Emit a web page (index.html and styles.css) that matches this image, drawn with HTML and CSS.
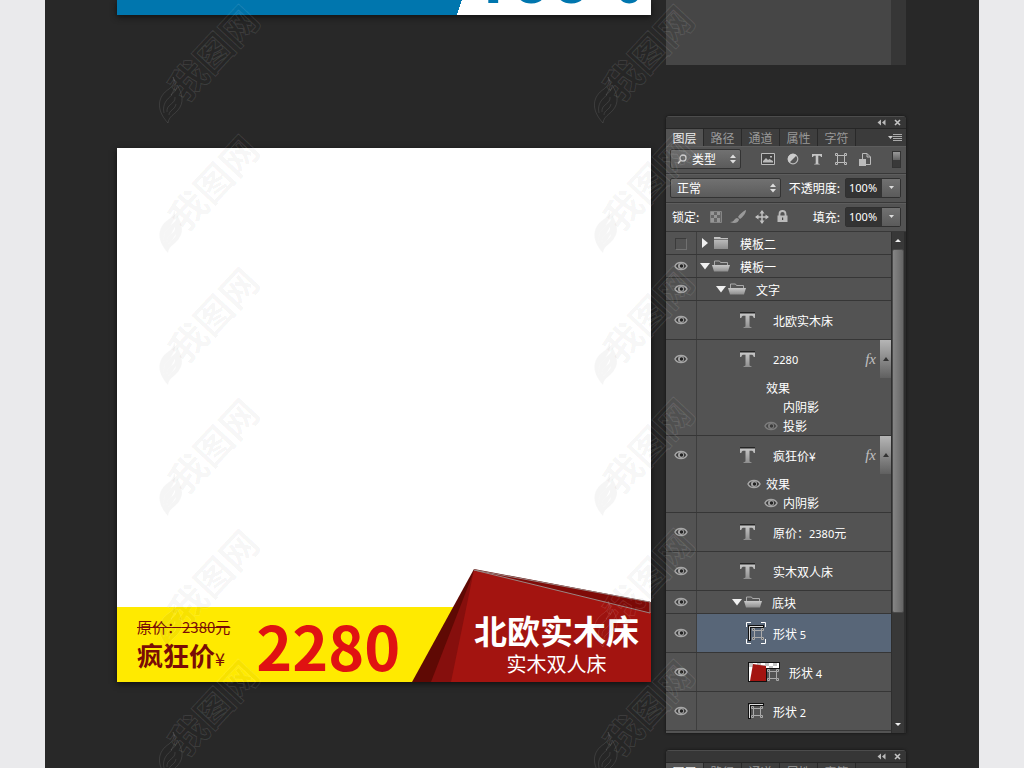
FILE: index.html
```html
<!DOCTYPE html>
<html lang="zh-CN">
<head>
<meta charset="utf-8">
<title>北欧实木床</title>
<link rel="stylesheet" href="styles.css">
</head>
<body>
<svg class="sprite" aria-hidden="true">
  <defs>
    <linearGradient id="metal" x1="0" y1="0" x2="0" y2="1"><stop offset="0" stop-color="#c8c8c8"/><stop offset="1" stop-color="#8e8e8e"/></linearGradient>
  </defs>
  <symbol id="eye" viewBox="0 0 14 10"><path d="M1 5C3 .3 11 .3 13 5 11 9.700 3 9.700 1 5Z" fill="#3a3a3a" stroke="#a6a6a6" stroke-width="1.500"/><circle cx="7" cy="5" r="3" fill="#a6a6a6"/><circle cx="7.500" cy="5" r="1.700" fill="#222"/></symbol>
  <symbol id="type" viewBox="0 0 17 17"><path d="M1 0h15v2H1z" fill="#252525"/><path d="M1 1.500h15v4.500h-1.300c-.3-1.700-1-2.200-2.700-2.200h-1.500v10c0 1 .5 1.300 2 1.400V16H4.500v-.8c1.500-.1 2-.4 2-1.400v-10H5C3.300 3.800 2.600 4.300 2.300 6H1z" fill="url(#metal)"/></symbol>
  <symbol id="type-small" viewBox="0 0 12 12"><path d="M1 1h10v3h-1c-.3-1-.7-1.300-2-1.300h-.7V10c0 .6.300.8 1.500.9v.6H3.200v-.6c1.200-.1 1.500-.3 1.500-.9V2.700H4C2.700 2.700 2.300 3 2 4H1z" fill="#c4c4c4"/></symbol>
  <symbol id="folder" viewBox="0 0 18 14"><path d="M2 1h6l1 1h7v11H2z" fill="url(#metal)"/><path d="M2 3.500h14" stroke="#777"/></symbol>
  <symbol id="folder-open" viewBox="0 0 18 14"><path d="M2.500 6V2h5l1 1.500h7V6" fill="#555" stroke="#aaa"/><path d="M0 6h18l-2 6.500H2z" fill="url(#metal)"/></symbol>
  <symbol id="down" viewBox="0 0 10 10"><path d="M0 2h10L5 8.500z" fill="#f0f0f0"/></symbol>
  <symbol id="right" viewBox="0 0 10 10"><path d="M2 0v10l6-5z" fill="#f0f0f0"/></symbol>
  <symbol id="vector" viewBox="0 0 12 12"><path d="M2.500 2.500h7v7h-7z" fill="none" stroke="currentColor"/><g fill="#555" stroke="currentColor"><path d="M.5.5h2v2h-2zM9.500.5h2v2h-2zM.5 9.500h2v2h-2zM9.500 9.500h2v2h-2z"/></g></symbol>
  <symbol id="updown" viewBox="0 0 8 10"><path d="M1 4h6L4 .5zM1 6h6L4 9.500z" fill="#ddd"/></symbol>
  <symbol id="collapse" viewBox="0 0 9 7"><path d="M4 .5v6L.5 3.500zM8.500.5v6L5 3.500z" fill="#bbb"/></symbol>
  <symbol id="close" viewBox="0 0 7 7"><path d="m1 1 5 5M6 1 1 6" stroke="#c4c4c4" stroke-width="1.600"/></symbol>
  <symbol id="menu" viewBox="0 0 14 8"><path d="M0 2h5L2.500 5z" fill="#ccc"/><path d="M5 .5h9M5 2.500h9M5 4.500h9M5 6.500h9" stroke="#aaa"/></symbol>
  <symbol id="mark" viewBox="0 0 110 120" overflow="visible">
    <path d="M8 118C-5 104-2 91 9 84c5-4 6-8 4-12 4 7 2 12-2 18 4-3 6-6 6-10 6 9 7 18 1 25-4 5-9 6-10 13ZM4 108c-2-9 3-14 8-18m-5 17c-1-8 9-8 8-15m-6 18c0-5 6-5 7-11"/>
    <text x="26" y="98" transform="rotate(-47 26 98)">我图网</text>
  </symbol>
</svg>

<main class="stage">
  <div class="canvases">
    <section class="banner"><span class="banner-text">100%</span></section>
    <section class="artboard">
      <div class="promo">
        <div class="offer">
          <div class="prices">
            <s class="old-price">原价：2380元</s>
            <strong class="deal">疯狂价<span class="yen">¥</span></strong>
          </div>
          <strong class="price">2280</strong>
        </div>
        <div class="ribbon">
          <svg class="ribbon-shape" viewBox="0 0 239 113" preserveAspectRatio="none" aria-hidden="true">
            <path d="M62 0 239 33v80H0z" fill="#5f0904"/>
            <path d="M62 2 239 43v70H19z" fill="#860f0d"/>
            <path d="M62 1 239 43v70H39z" fill="#a31410"/>
            <path d="M62 1 238 33v11z" fill="#7f0b08" stroke="#9b8583"/>
          </svg>
          <strong class="product">北欧实木床</strong>
          <span class="product-kind">实木双人床</span>
        </div>
      </div>
    </section>
  </div>

  <div class="docks">
    <div class="dock-tail"></div>

    <section class="panel" aria-label="图层">
      <header class="panel-bar">
        <button aria-label="折叠"><svg width="9" height="7"><use href="#collapse"/></svg></button>
        <button aria-label="关闭"><svg width="7" height="7"><use href="#close"/></svg></button>
      </header>
      <nav class="tabs">
        <button class="tab active">图层</button><button class="tab">路径</button><button class="tab">通道</button><button class="tab">属性</button><button class="tab">字符</button>
        <button class="tab-menu" aria-label="菜单"><svg width="14" height="8"><use href="#menu"/></svg></button>
      </nav>
      <div class="tool-row filter-row">
        <button class="drop drop-kind"><svg width="10" height="10" viewBox="0 0 10 10"><circle cx="6" cy="4" r="3" fill="none" stroke="#ccc" stroke-width="1.300"/><path d="M4 6 1 9.500" stroke="#ccc" stroke-width="1.500"/></svg><span>类型</span><svg class="end" width="8" height="10"><use href="#updown"/></svg></button>
        <div class="filters">
          <button aria-label="像素"><svg width="14" height="12" viewBox="0 0 14 12"><path d="M.5.500h13v11H.5z" fill="#444" stroke="#bbb"/><path d="M2 9.500V8l3-3 2 2 1.500-1L12 8v1.500z" fill="#bbb"/><path d="M9 3h2v1.500H9z" fill="#bbb"/></svg></button>
          <button aria-label="调整"><svg width="12" height="12" viewBox="0 0 12 12"><circle cx="6" cy="6" r="4.800" fill="#555" stroke="#bbb" stroke-width="1.200"/><path d="M2.300 9.700A5.200 5.200 0 0 1 9.700 2.300z" fill="#ccc"/></svg></button>
          <button aria-label="文字"><svg width="12" height="12"><use href="#type-small"/></svg></button>
          <button aria-label="形状"><svg width="12" height="12"><use href="#vector"/></svg></button>
          <button aria-label="智能对象"><svg width="12" height="13" viewBox="0 0 12 13"><path d="M3.500 6V.5H8L11.500 4v7.500H7" fill="none" stroke="#bbb"/><path d="M8 .5V4h3.500" fill="none" stroke="#bbb"/><path d="M0 6h7v7H0z" fill="#bbb"/></svg></button>
        </div>
        <button class="switch" aria-label="筛选开关"></button>
      </div>
      <div class="tool-row">
        <button class="drop drop-mode"><span>正常</span><svg class="end" width="8" height="10"><use href="#updown"/></svg></button>
        <label class="right-label" for="opacity">不透明度:</label>
        <span class="number"><input id="opacity" value="100%"><button aria-label="不透明度选项"><svg width="5" height="3" viewBox="0 0 5 3"><path d="M0 0h5L2.500 3z" fill="#ddd"/></svg></button></span>
      </div>
      <div class="tool-row">
        <span class="lock-label">锁定:</span>
        <div class="locks">
          <button aria-label="锁定透明像素"><svg width="12" height="12" viewBox="0 0 12 12"><path d="M.5.5h11v11H.5z" fill="#666" stroke="#858585"/><path d="M1 1h3v3H1zM7 1h3v3H7zM4 4h3v3H4zM1 7h3v4H1zM7 7h3v4H7z" fill="#959595"/></svg></button>
          <button aria-label="锁定图像像素"><svg width="17" height="14" viewBox="0 0 17 14"><path d="M16 0c-3 1-7 5-8 7l2 2c3-2 6-6 6-9ZM7 8C4 8 5 12 0 12c4 2 9 1 9-3z" fill="#999"/></svg></button>
          <button aria-label="锁定位置"><svg width="14" height="14" viewBox="0 0 14 14"><path d="M7 1v12M1 7h12" stroke="#c0c0c0" stroke-width="1.500"/><path d="M7 0 4.500 3.500h5zM7 14l-2.500-3.500h5zM0 7l3.500-2.500v5zM14 7l-3.500-2.500v5z" fill="#c0c0c0"/></svg></button>
          <button aria-label="全部锁定"><svg width="11" height="13" viewBox="0 0 11 13"><path d="M2.500 6V4a3 3 0 0 1 6 0v2" fill="none" stroke="#bbb" stroke-width="1.800"/><path d="M.5 5.500h10V12H.5z" fill="#bbb"/><path d="M5 7.500h1.200V10H5z" fill="#444"/></svg></button>
        </div>
        <label class="right-label" for="fill">填充:</label>
        <span class="number"><input id="fill" value="100%"><button aria-label="填充选项"><svg width="5" height="3" viewBox="0 0 5 3"><path d="M0 0h5L2.500 3z" fill="#ddd"/></svg></button></span>
      </div>

      <div class="list-area">
        <ul class="layers">
          <li class="layer group"><button class="vis" aria-label="显示"><span class="box"></span></button><div class="entry"><svg class="toggle" width="10" height="10"><use href="#right"/></svg><svg class="folder" width="18" height="14"><use href="#folder"/></svg><span>模板二</span></div></li>
          <li class="layer group"><button class="vis" aria-label="隐藏"><svg width="14" height="10"><use href="#eye"/></svg></button><div class="entry"><svg class="toggle" width="10" height="10"><use href="#down"/></svg><svg class="folder" width="18" height="14"><use href="#folder-open"/></svg><span>模板一</span></div></li>
          <li class="layer group"><button class="vis" aria-label="隐藏"><svg width="14" height="10"><use href="#eye"/></svg></button><div class="entry depth-1"><svg class="toggle" width="10" height="10"><use href="#down"/></svg><svg class="folder" width="18" height="14"><use href="#folder-open"/></svg><span>文字</span></div></li>
          <li class="layer"><button class="vis" aria-label="隐藏"><svg width="14" height="10"><use href="#eye"/></svg></button><div class="entry"><span class="thumb"><svg width="17" height="17"><use href="#type"/></svg></span><span>北欧实木床</span></div></li>
          <li class="layer"><button class="vis" aria-label="隐藏"><svg width="14" height="10"><use href="#eye"/></svg></button>
            <div class="body">
              <div class="entry"><span class="thumb"><svg width="17" height="17"><use href="#type"/></svg></span><span class="num">2280</span><span class="fx">fx</span><button class="fold" aria-label="收起效果"><svg width="6" height="4" viewBox="0 0 6 4"><path d="M3 0 6 4H0z" fill="#333"/></svg></button></div>
              <ul class="effects">
                <li><span class="mini"></span>效果</li>
                <li class="sub"><span class="mini"></span>内阴影</li>
                <li class="sub"><span class="mini dim"><svg width="14" height="10"><use href="#eye"/></svg></span>投影</li>
              </ul>
            </div></li>
          <li class="layer"><button class="vis" aria-label="隐藏"><svg width="14" height="10"><use href="#eye"/></svg></button>
            <div class="body">
              <div class="entry"><span class="thumb"><svg width="17" height="17"><use href="#type"/></svg></span><span>疯狂价¥</span><span class="fx">fx</span><button class="fold" aria-label="收起效果"><svg width="6" height="4" viewBox="0 0 6 4"><path d="M3 0 6 4H0z" fill="#333"/></svg></button></div>
              <ul class="effects">
                <li><span class="mini"><svg width="14" height="10"><use href="#eye"/></svg></span>效果</li>
                <li class="sub"><span class="mini"><svg width="14" height="10"><use href="#eye"/></svg></span>内阴影</li>
              </ul>
            </div></li>
          <li class="layer"><button class="vis" aria-label="隐藏"><svg width="14" height="10"><use href="#eye"/></svg></button><div class="entry"><span class="thumb"><svg width="17" height="17"><use href="#type"/></svg></span><span>原价：<span class="num">2380</span>元</span></div></li>
          <li class="layer"><button class="vis" aria-label="隐藏"><svg width="14" height="10"><use href="#eye"/></svg></button><div class="entry"><span class="thumb"><svg width="17" height="17"><use href="#type"/></svg></span><span>实木双人床</span></div></li>
          <li class="layer group"><button class="vis" aria-label="隐藏"><svg width="14" height="10"><use href="#eye"/></svg></button><div class="entry depth-2"><svg class="toggle" width="10" height="10"><use href="#down"/></svg><svg class="folder" width="18" height="14"><use href="#folder-open"/></svg><span>底块</span></div></li>
          <li class="layer selected"><button class="vis" aria-label="隐藏"><svg width="14" height="10"><use href="#eye"/></svg></button><div class="entry"><span class="thumb shape"><svg width="20" height="22" viewBox="0 0 20 22"><path d="M.5 5V.5H5M15 .5h4.500V5M.5 17v4.500H5M15 21.500h4.500V17" fill="none" stroke="#fff"/><path d="M2 3h16v3H5v13H2z" fill="#111"/><path d="M3.500 18V4.500H17" fill="none" stroke="#ddd"/><use href="#vector" x="6" y="6" width="12" height="12"/></svg></span><span>形状 <span class="num">5</span></span></div></li>
          <li class="layer"><button class="vis" aria-label="隐藏"><svg width="14" height="10"><use href="#eye"/></svg></button><div class="entry"><span class="thumb shape wide"><svg width="34" height="22" viewBox="0 0 34 22"><path d="M2 1h32v7H21v13H2z" fill="#111"/><path d="M3 2h30v5H20v13H3z" fill="#fff"/><path d="M3 2h4v4H3zM11 2h4v3h-4zM19 2h4v3h-4zM27 2h4v3h-4zM15 4h4v3h-4zM23 5h4v2h-4z" fill="#c6c6c6"/><path d="m7 3 13 2v15H4z" fill="#a31410"/><use href="#vector" x="21" y="8" width="12" height="12"/></svg></span><span>形状 <span class="num">4</span></span></div></li>
          <li class="layer"><button class="vis" aria-label="隐藏"><svg width="14" height="10"><use href="#eye"/></svg></button><div class="entry"><span class="thumb shape"><svg width="20" height="22" viewBox="0 0 20 22"><path d="M2 3h16v3H5v13H2z" fill="#111"/><path d="M3.500 18V4.500H17" fill="none" stroke="#ddd"/><use href="#vector" x="5" y="6" width="12" height="12"/></svg></span><span>形状 <span class="num">2</span></span></div></li>
        </ul>
        <div class="scroll">
          <button aria-label="向上"><svg width="6" height="3" viewBox="0 0 6 3"><path d="M3 0 6 3H0z" fill="#eee"/></svg></button>
          <div class="track"><div class="bar"></div></div>
          <button aria-label="向下"><svg width="6" height="3" viewBox="0 0 6 3"><path d="M0 0h6L3 3z" fill="#eee"/></svg></button>
        </div>
      </div>
    </section>

    <section class="panel" aria-label="图层">
      <header class="panel-bar">
        <button aria-label="折叠"><svg width="9" height="7"><use href="#collapse"/></svg></button>
        <button aria-label="关闭"><svg width="7" height="7"><use href="#close"/></svg></button>
      </header>
      <nav class="tabs">
        <button class="tab active">图层</button><button class="tab">路径</button><button class="tab">通道</button><button class="tab">属性</button><button class="tab">字符</button>
        <button class="tab-menu" aria-label="菜单"><svg width="14" height="8"><use href="#menu"/></svg></button>
      </nav>
    </section>
  </div>
</main>

<svg class="watermarks" aria-hidden="true">
  <g id="mark-column">
    <use href="#mark" x="160" y="5" width="110" height="120"/>
    <use href="#mark" x="160" y="135" width="110" height="120"/>
    <use href="#mark" x="160" y="267" width="110" height="120"/>
    <use href="#mark" x="160" y="398" width="110" height="120"/>
    <use href="#mark" x="160" y="529" width="110" height="120"/>
    <use href="#mark" x="160" y="660" width="110" height="120"/>
  </g>
  <use href="#mark-column" x="435"/>
</svg>
</body>
</html>
```
FILE: styles.css
```css
* { box-sizing: border-box; }

body {
  margin: 0;
  position: relative;
  height: 100vh;
  overflow: hidden;
  background: #eaeaec;
  color: #fff;
  font: 12px/18px "Noto Sans CJK SC", "Noto Sans", sans-serif;
}

button {
  display: flex;
  align-items: center;
  justify-content: center;
  margin: 0;
  padding: 0;
  border: 0;
  background: none;
  color: inherit;
  font: inherit;
}

ul { list-style: none; margin: 0; padding: 0; }
svg { display: block; flex: none; }
.sprite { position: absolute; width: 0; height: 0; }

.stage {
  display: grid;
  grid-template-columns: minmax(0, 1fr) 240px;
  gap: 15px;
  height: 100%;
  margin: 0 45px;
  padding: 0 73px 0 72px;
  overflow: hidden;
  background: #282828;
}

/* Canvases */
.canvases { display: flex; flex-direction: column; gap: 133px; }

.banner {
  display: flex;
  justify-content: flex-end;
  align-items: flex-end;
  height: 15px;
  padding: 0 8px 1px 0;
  overflow: hidden;
  background: linear-gradient(108deg, #0076ae 64%, #fff 64%);
  box-shadow: 0 2px 6px #111;
  color: #0076ae;
}
.banner-text { font: 700 70px/70px Roboto, sans-serif; }

.artboard {
  display: flex;
  flex-direction: column;
  justify-content: flex-end;
  aspect-ratio: 1;
  background: #fff;
  box-shadow: 0 2px 6px #111;
}

.promo { position: relative; display: flex; align-items: flex-end; height: 113px; }
.offer {
  display: flex;
  align-items: center;
  gap: 26px;
  width: 100%;
  height: 75px;
  padding-left: 20px;
  background: #ffea00;
}
.prices { display: flex; flex-direction: column; padding-top: 4px; color: #7a0c06; }
.old-price { font-size: 15px; line-height: 20px; }
.deal { font-size: 26px; line-height: 36px; font-weight: 700; }
.yen { font-size: 18px; font-weight: 400; }
.price { color: #e01212; font-size: 61px; line-height: 75px; }

.ribbon {
  position: absolute;
  right: 0;
  bottom: 0;
  display: flex;
  flex-direction: column;
  align-items: center;
  width: 239px;
  height: 113px;
  padding: 40px 0 0 50px;
}
.ribbon-shape { position: absolute; inset: 0; width: 100%; height: 100%; }
.product, .product-kind { position: relative; white-space: nowrap; }
.product { font-size: 33px; line-height: 42px; }
.product-kind { font-size: 20px; line-height: 26px; }

/* Docked panels */
.docks { display: flex; flex-direction: column; }
.dock-tail {
  flex: none;
  height: 65px;
  margin-bottom: 51px;
  background: #464646;
  border-right: 15px solid #363636;
}

.panel {
  flex: none;
  margin-bottom: 17px;
  overflow: hidden;
  border-radius: 4px 4px 0 0;
  background: #535353;
  box-shadow: 0 0 3px #111;
}
.panel-bar {
  display: flex;
  justify-content: flex-end;
  align-items: center;
  gap: 8px;
  height: 12px;
  padding-right: 5px;
  background: #363636;
  border-top: 1px solid #4c4c4c;
}
.tabs { display: flex; height: 18px; background: #3b3b3b; border-top: 1px solid #262626; }
.tab {
  width: 38px;
  background: #3e3e3e;
  border-right: 1px solid #292929;
  color: #999;
  line-height: 17px;
}
.tab.active { background: #535353; color: #eee; }
.tab-menu { margin-left: auto; padding-right: 4px; }

.tool-row {
  display: flex;
  align-items: center;
  height: 29px;
  padding: 0 5px 1px 4px;
  border-bottom: 1px solid #383838;
  box-shadow: inset 0 1px #5d5d5d;
}
.filter-row { height: 28px; }

.drop {
  gap: 5px;
  justify-content: flex-start;
  height: 20px;
  padding: 0 3px 0 6px;
  border: 1px solid #333;
  border-radius: 2px;
  background: linear-gradient(#717171, #5b5b5b);
}
.drop .end { margin-left: auto; }
.drop-kind { width: 71px; }
.drop-mode { width: 111px; }
.filters { display: flex; justify-content: space-between; width: 110px; margin-left: 20px; color: #bbb; }
.switch {
  width: 9px;
  height: 17px;
  margin-left: auto;
  border: 1px solid #333;
  background: linear-gradient(#999 0, #666 50%, #393939 50%);
}

.right-label { margin-left: auto; padding-right: 5px; }
.number {
  display: flex;
  width: 56px;
  height: 20px;
  border: 1px solid #303030;
  border-radius: 2px;
}
.number input {
  width: 35px;
  padding: 0 0 0 3px;
  border: 0;
  background: #333;
  color: #fff;
  font: 11px/18px "Noto Sans", sans-serif;
}
.number button { flex: 1; border-left: 1px solid #333; background: linear-gradient(#717171, #5b5b5b); }
.lock-label { margin-left: 2px; }
.locks { display: flex; align-items: center; gap: 8px; margin-left: 11px; }

.list-area { display: grid; grid-template-columns: minmax(0, 1fr) 15px; }
.layers { padding-bottom: 2px; }
.layer { display: flex; align-items: stretch; border-bottom: 1px solid #363636; }
.vis { align-self: stretch; align-items: flex-start; width: 31px; padding-top: 14px; border-right: 1px solid #3e3e3e; }
.group .vis { padding-top: 6px; }
.box { width: 12px; height: 12px; border: 1px solid #3b3b3b; border-right-color: #707070; border-bottom-color: #707070; }

.body { flex: 1; }
.entry { display: flex; flex: 1; align-items: center; height: 38px; padding-left: 42px; line-height: 20px; }
.entry > span:nth-of-type(n + 1):not(.thumb):not(.fx) { padding-top: 1px; }
.group .entry { height: 22px; padding-left: 3px; }
.group .depth-1 { padding-left: 19px; }
.group .depth-2 { padding-left: 35px; }
.toggle { margin-right: 2px; }
.folder { margin-right: 10px; }
.thumb { width: 34px; }
.thumb.shape { color: #aaa; padding-left: 7px; }
.thumb.shape.wide { width: 50px; }
.num { font: 11px/18px "Noto Sans", sans-serif; }
.selected .entry { background: #586678; }

.fx { margin-left: auto; margin-right: 4px; color: #c0c0c0; font: italic 15px/18px "Liberation Serif", serif; }
.fold { width: 11px; height: 38px; background: linear-gradient(#b5b5b5, #606060); }

.effects { line-height: 19px; padding-left: 50px; }
.effects li { display: flex; align-items: center; }
.effects .sub { padding-left: 17px; }
.mini { width: 19px; }
.dim { opacity: 0.5; }

.scroll {
  display: flex;
  flex-direction: column;
  background: #383838;
  border-left: 1px solid #2e2e2e;
  border-right: 2px solid #2c2c2c;
}
.scroll button { flex: none; height: 17px; }
.track { flex: 1; }
.bar { height: 78%; border-radius: 2px; background: linear-gradient(90deg, #858585, #666); border: 1px solid #4a4a4a; }

/* Watermark */
.watermarks {
  position: absolute;
  inset: 0;
  width: 100%;
  height: 100%;
  pointer-events: none;
  fill: #000;
  fill-opacity: 0.04;
  stroke: #fff;
  stroke-opacity: 0.1;
  font: 700 37px "Noto Sans CJK SC", sans-serif;
}
```
